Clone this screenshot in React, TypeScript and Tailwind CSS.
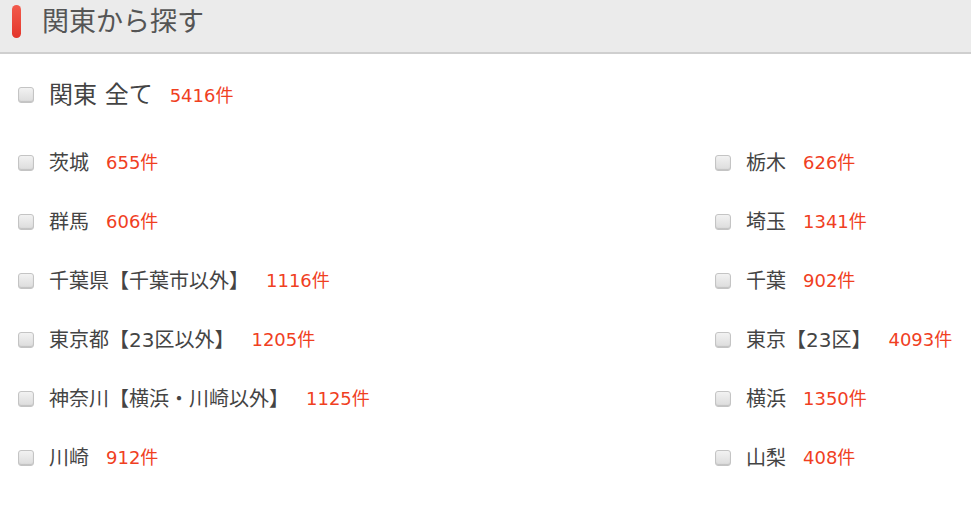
import React from 'react';

type Area = {
	label: string;
	count: number;
};

const leftAreas: Area[] = [
	{ label: '茨城', count: 655 },
	{ label: '群馬', count: 606 },
	{ label: '千葉県【千葉市以外】', count: 1116 },
	{ label: '東京都【23区以外】', count: 1205 },
	{ label: '神奈川【横浜・川崎以外】', count: 1125 },
	{ label: '川崎', count: 912 },
];

const rightAreas: Area[] = [
	{ label: '栃木', count: 626 },
	{ label: '埼玉', count: 1341 },
	{ label: '千葉', count: 902 },
	{ label: '東京【23区】', count: 4093 },
	{ label: '横浜', count: 1350 },
	{ label: '山梨', count: 408 },
];

// fake checkbox, grey and slightly raised
const Box = () => (
	<span className="inline-block w-[16px] h-[16px] shrink-0 rounded-[3px] border border-[#c4c4c4] bg-gradient-to-b from-[#f2f2f2] to-[#dcdcdc] shadow-[inset_0_-1px_1px_rgba(0,0,0,0.12)]" />
);

const Row = ({ area }: { area: Area }) => (
	<label className="flex items-center h-[59px] cursor-pointer">
		<Box />
		<span className="ml-[15px] text-[20px] text-[#444]">{area.label}</span>
		<span className="ml-[17px] text-[18px] text-[#f0401f]">
			{area.count}件
		</span>
	</label>
);

export default function App() {
	return (
		<div
			className="w-[971px] bg-white"
			style={{
				fontFamily: '"DejaVu Sans", "Noto Sans CJK JP", sans-serif',
			}}
		>
			{/* heading */}
			<div className="flex items-center h-[54px] bg-[#ebebeb] border-b-2 border-[#cfcfcf]">
				<span className="ml-[12px] w-[9px] h-[33px] -mt-[9px] rounded-full bg-gradient-to-b from-[#f25a4c] to-[#e3342a]" />
				<h2 className="ml-[21px] -mt-[8px] text-[27px] text-[#555]">
					関東から探す
				</h2>
			</div>

			<div className="pl-[18px] pt-[19px]">
				<label className="flex items-center h-[44px] cursor-pointer">
					<Box />
					<span className="ml-[15px] text-[24px] text-[#444]">
						関東 全て
					</span>
					<span className="ml-[17px] text-[18px] text-[#f0401f]">
						5416件
					</span>
				</label>

				<div className="grid grid-cols-[1fr_256px] mt-[16px]">
					<div>
						{leftAreas.map((a) => (
							<Row key={a.label} area={a} />
						))}
					</div>
					<div>
						{rightAreas.map((a) => (
							<Row key={a.label} area={a} />
						))}
					</div>
				</div>
			</div>
		</div>
	);
}
